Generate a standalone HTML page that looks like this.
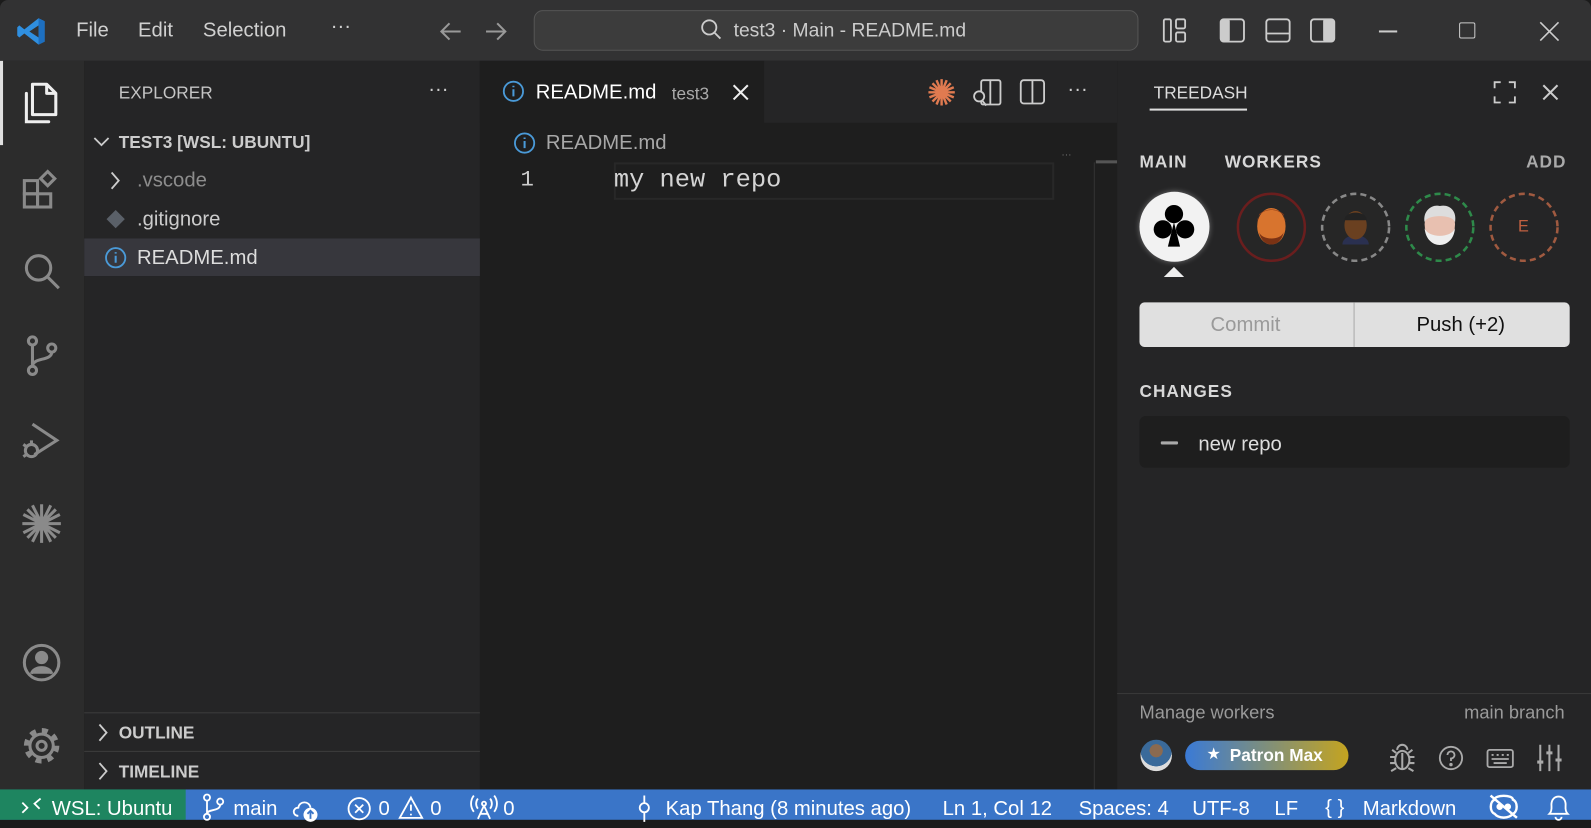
<!DOCTYPE html>
<html><head><meta charset="utf-8">
<style>
*{box-sizing:border-box;margin:0;padding:0}
html,body{width:1591px;height:828px;overflow:hidden;background:#1b1b1b}
#w{position:absolute;left:0;top:0;width:1568px;height:816px;transform:scale(1.01467,1.01471);transform-origin:0 0;font-family:"Liberation Sans",sans-serif;color:#ccc;background:#1b1b1b}
.a{position:absolute}
.t{position:absolute;white-space:nowrap;line-height:1}
svg{position:absolute;overflow:visible}
</style></head><body><div id="w">
<!-- title bar -->
<div class="a" style="left:0;top:0;width:1568px;height:60px;background:#323233;border-radius:8px 8px 0 0"></div>
<svg style="left:16px;top:16px" width="30" height="30" viewBox="0 0 30 30"><path d="M22 2 L28 5 V25 L22 28 L8 17 L3 21 L1 19 V11 L3 9 L8 13 Z M22 9 L13 15 L22 21 Z" fill="#2f8fe0"/><path d="M22 2 L28 5 V25 L22 28 Z" fill="#1d6fc0"/></svg>
<div class="t" style="left:75px;top:20px;font-size:20px;color:#d0d0d0">File</div>
<div class="t" style="left:136px;top:20px;font-size:20px;color:#d0d0d0">Edit</div>
<div class="t" style="left:200px;top:20px;font-size:20px;color:#d0d0d0">Selection</div>
<div class="t" style="left:326px;top:16px;font-size:20px;color:#d0d0d0">···</div>
<svg style="left:432px;top:20px" width="24" height="22"><path d="M22 11H3 M11 3 L3 11 L11 19" stroke="#999" stroke-width="2" fill="none"/></svg>
<svg style="left:477px;top:20px" width="24" height="22"><path d="M2 11H21 M13 3 L21 11 L13 19" stroke="#999" stroke-width="2" fill="none"/></svg>
<div class="a" style="left:526px;top:10px;width:596px;height:40px;background:#3c3c3c;border:1px solid #555;border-radius:9px"></div>
<svg style="left:690px;top:18px" width="22" height="22"><circle cx="9" cy="9" r="7" stroke="#ccc" stroke-width="1.8" fill="none"/><path d="M14 14 L20 20" stroke="#ccc" stroke-width="1.8"/></svg>
<div class="t" style="left:723px;top:21px;font-size:19px;color:#ccc">test3 · Main - README.md</div>
<svg style="left:1146px;top:18px" width="24" height="26"><rect x="1" y="1" width="7" height="22" rx="1.5" stroke="#ccc" stroke-width="1.8" fill="none"/><rect x="13" y="1" width="9" height="9" rx="1.5" stroke="#ccc" stroke-width="1.8" fill="none"/><rect x="13" y="14" width="9" height="9" rx="1.5" stroke="#ccc" stroke-width="1.8" fill="none"/></svg>
<svg style="left:1202px;top:18px" width="26" height="26"><rect x="1" y="1" width="23" height="22" rx="3" stroke="#ccc" stroke-width="1.8" fill="none"/><rect x="1" y="1" width="9" height="22" rx="2" fill="#ccc"/></svg>
<svg style="left:1247px;top:18px" width="26" height="26"><rect x="1" y="1" width="23" height="22" rx="3" stroke="#ccc" stroke-width="1.8" fill="none"/><path d="M1 15H24" stroke="#ccc" stroke-width="1.8"/></svg>
<svg style="left:1291px;top:18px" width="26" height="26"><rect x="1" y="1" width="23" height="22" rx="3" stroke="#ccc" stroke-width="1.8" fill="none"/><rect x="13" y="1" width="11" height="22" rx="2" fill="#ccc"/></svg>
<div class="a" style="left:1359px;top:30px;width:18px;height:2px;background:#ccc"></div>
<div class="a" style="left:1438px;top:22px;width:16px;height:16px;border:1.8px solid #ccc;border-radius:2px"></div>
<svg style="left:1517px;top:21px" width="20" height="20"><path d="M1 1L19 19M19 1L1 19" stroke="#ccc" stroke-width="1.6"/></svg>

<!-- activity bar -->
<div class="a" style="left:0;top:60px;width:83px;height:718px;background:#2c2c2c"></div>
<div class="a" style="left:0;top:60px;width:3px;height:83px;background:#e0e0e0"></div>
<svg style="left:22px;top:80px" width="38" height="44"><path d="M10 3 H24 L33 12 V33 H10 Z M24 3 V12 H33" stroke="#eee" stroke-width="3" fill="none" stroke-linejoin="round"/><path d="M4 12 V40 H26" stroke="#eee" stroke-width="3" fill="none" stroke-linecap="round"/></svg>
<svg style="left:22px;top:166px" width="38" height="40" fill="none" stroke="#8a8a8a" stroke-width="3"><rect x="2" y="12" width="13" height="13"/><rect x="2" y="25" width="13" height="13"/><rect x="15" y="25" width="13" height="13"/><path d="M18 10 L25 3 L32 10 L25 17 Z"/></svg>
<svg style="left:22px;top:248px" width="40" height="40" fill="none" stroke="#8a8a8a" stroke-width="3"><circle cx="16" cy="16" r="12"/><path d="M25 25 L36 36"/></svg>
<svg style="left:24px;top:330px" width="36" height="42" fill="none" stroke="#8a8a8a" stroke-width="3"><circle cx="8" cy="6" r="4"/><circle cx="8" cy="35" r="4"/><circle cx="27" cy="13" r="4"/><path d="M8 10 V31 M27 17 C27 26 8 22 8 31"/></svg>
<svg style="left:20px;top:414px" width="40" height="42" fill="none" stroke="#8a8a8a" stroke-width="3"><path d="M12 4 L36 20 L14 34"/><circle cx="11" cy="30" r="6"/><path d="M3 24 L6 26 M3 36 L6 34 M11 20 V23"/></svg>
<svg style="left:20px;top:495px" width="42" height="42" stroke="#8a8a8a" stroke-width="3"><path d="M21 2V40 M2 21H40 M7 7L35 35 M35 7L7 35 M12 3L30 39 M30 3L12 39 M3 12L39 30 M3 30L39 12"/></svg>
<svg style="left:22px;top:634px" width="40" height="40" fill="none" stroke="#8a8a8a" stroke-width="3"><circle cx="19" cy="19" r="17"/><circle cx="19" cy="14" r="5" fill="#8a8a8a"/><path d="M9 30 C11 22 27 22 29 30" fill="#8a8a8a"/></svg>
<svg style="left:22px;top:716px" width="40" height="40" fill="none" stroke="#8a8a8a"><circle cx="19" cy="19" r="15" stroke-width="5" stroke-dasharray="5.9 5.9"/><circle cx="19" cy="19" r="11.5" stroke-width="3"/><circle cx="19" cy="19" r="4.5" stroke-width="3"/></svg>

<!-- sidebar -->
<div class="a" style="left:83px;top:60px;width:390px;height:718px;background:#252526"></div>
<div class="t" style="left:117px;top:83px;font-size:17px;color:#c5c5c5">EXPLORER</div>
<div class="t" style="left:422px;top:78px;font-size:20px;color:#ccc">···</div>
<svg style="left:91px;top:133px" width="18" height="14"><path d="M2 3L9 10L16 3" stroke="#ccc" stroke-width="1.8" fill="none"/></svg>
<div class="t" style="left:117px;top:132px;font-size:17px;font-weight:bold;color:#ccc">TEST3 [WSL: UBUNTU]</div>
<svg style="left:108px;top:168px" width="12" height="20"><path d="M2 2L9 10L2 18" stroke="#ccc" stroke-width="1.8" fill="none"/></svg>
<div class="t" style="left:135px;top:168px;font-size:20px;color:#8c8c8c">.vscode</div>
<svg style="left:104px;top:206px" width="20" height="20"><path d="M10 1L19 10L10 19L1 10Z" fill="#5a6068"/></svg>
<div class="t" style="left:135px;top:206px;font-size:20px;color:#ccc">.gitignore</div>
<div class="a" style="left:83px;top:235px;width:390px;height:37px;background:#37373d"></div>
<svg style="left:103px;top:243px" width="22" height="22"><circle cx="11" cy="11" r="9.5" stroke="#4a9ad8" stroke-width="1.8" fill="none"/><path d="M11 9V16M11 5.5V7" stroke="#4a9ad8" stroke-width="2"/></svg>
<div class="t" style="left:135px;top:244px;font-size:20px;color:#ddd">README.md</div>
<div class="a" style="left:83px;top:702px;width:390px;height:1px;background:#3d3d3d"></div>
<svg style="left:96px;top:712px" width="12" height="20"><path d="M2 2L9 10L2 18" stroke="#ccc" stroke-width="1.8" fill="none"/></svg>
<div class="t" style="left:117px;top:714px;font-size:17px;font-weight:bold;color:#ccc">OUTLINE</div>
<div class="a" style="left:83px;top:740px;width:390px;height:1px;background:#3d3d3d"></div>
<svg style="left:96px;top:750px" width="12" height="20"><path d="M2 2L9 10L2 18" stroke="#ccc" stroke-width="1.8" fill="none"/></svg>
<div class="t" style="left:117px;top:752px;font-size:17px;font-weight:bold;color:#ccc">TIMELINE</div>

<!-- editor -->
<div class="a" style="left:473px;top:60px;width:628px;height:718px;background:#1e1e1e"></div>
<div class="a" style="left:473px;top:60px;width:628px;height:61px;background:#252526"></div>
<div class="a" style="left:473px;top:60px;width:280px;height:61px;background:#1e1e1e"></div>
<svg style="left:495px;top:79px" width="22" height="22"><circle cx="11" cy="11" r="9.5" stroke="#4a9ad8" stroke-width="1.8" fill="none"/><path d="M11 9V16M11 5.5V7" stroke="#4a9ad8" stroke-width="2"/></svg>
<div class="t" style="left:528px;top:81px;font-size:20px;color:#fff">README.md</div>
<div class="t" style="left:662px;top:84px;font-size:17px;color:#aaa">test3</div>
<svg style="left:721px;top:82px" width="18" height="18"><path d="M2 2L16 16M16 2L2 16" stroke="#eee" stroke-width="2"/></svg>
<svg style="left:914px;top:77px" width="28" height="28" stroke="#e07a50" stroke-width="2.4"><path d="M14 1V27 M1 14H27 M5 5L23 23 M23 5L5 23 M9 2L19 26 M19 2L9 26 M2 9L26 19 M2 19L26 9"/></svg>
<svg style="left:958px;top:78px" width="30" height="28" fill="none" stroke="#ccc" stroke-width="1.8"><rect x="9" y="1" width="19" height="24" rx="2"/><path d="M18 1V25"/><circle cx="7" cy="17" r="5" fill="#252526"/><path d="M10 21L14 26"/></svg>
<svg style="left:1005px;top:78px" width="26" height="26" fill="none" stroke="#ccc" stroke-width="1.8"><rect x="1" y="1" width="23" height="23" rx="3"/><path d="M12.5 1V24"/></svg>
<div class="t" style="left:1052px;top:78px;font-size:20px;color:#ccc">···</div>
<svg style="left:506px;top:130px" width="22" height="22"><circle cx="11" cy="11" r="9.5" stroke="#4a9ad8" stroke-width="1.8" fill="none"/><path d="M11 9V16M11 5.5V7" stroke="#4a9ad8" stroke-width="2"/></svg>
<div class="t" style="left:538px;top:131px;font-size:20px;color:#a8a8a8">README.md</div>
<div class="a" style="left:605px;top:160px;width:434px;height:37px;border:2px solid #282828"></div>
<div class="t" style="left:513px;top:167px;font-size:22px;font-family:'Liberation Mono',monospace;color:#ccc">1</div>
<div class="t" style="left:605px;top:165px;font-size:25px;font-family:'Liberation Mono',monospace;color:#d4d4d4">my new repo</div>
<div class="t" style="left:1046px;top:148px;font-size:10px;color:#777">···</div>
<div class="a" style="left:1078px;top:160px;width:1px;height:618px;background:#333"></div>
<div class="a" style="left:1080px;top:158px;width:21px;height:3px;background:#555"></div>

<!-- right panel -->
<div class="a" style="left:1101px;top:60px;width:467px;height:718px;background:#252526"></div>
<div class="t" style="left:1137px;top:83px;font-size:17px;color:#ddd">TREEDASH</div>
<div class="a" style="left:1133px;top:107px;width:96px;height:2px;background:#ddd"></div>
<svg style="left:1472px;top:80px" width="22" height="22" fill="none" stroke="#ccc" stroke-width="1.8"><path d="M1 7V1H7 M15 1H21V7 M21 15V21H15 M7 21H1V15"/></svg>
<svg style="left:1519px;top:82px" width="18" height="18"><path d="M2 2L16 16M16 2L2 16" stroke="#ccc" stroke-width="2"/></svg>
<div class="t" style="left:1123px;top:151px;font-size:17px;font-weight:bold;color:#d8d8d8;letter-spacing:1px">MAIN</div>
<div class="t" style="left:1207px;top:151px;font-size:17px;font-weight:bold;color:#d8d8d8;letter-spacing:1px">WORKERS</div>
<div class="t" style="left:1504px;top:151px;font-size:17px;font-weight:bold;color:#aaa;letter-spacing:1px">ADD</div>
<div class="a" style="left:1123px;top:189px;width:69px;height:69px;border-radius:50%;background:#f2f2f2;box-shadow:0 0 6px rgba(255,255,255,.35)"></div>
<svg style="left:1135px;top:199px" width="44" height="46"><circle cx="22" cy="12" r="9"/><circle cx="11" cy="27" r="9"/><circle cx="33" cy="27" r="9"/><path d="M22 20 L16 44 H28 Z"/></svg>
<svg style="left:1146px;top:262px" width="22" height="12"><path d="M11 1L21 11H1Z" fill="#eee"/></svg>
<svg style="left:1218px;top:189px" width="70" height="70"><circle cx="35" cy="35" r="33" stroke="#6a1e1e" stroke-width="2.5" fill="#262626"/><ellipse cx="35" cy="34" rx="14" ry="18" fill="#d8742e"/><path d="M21 30 C21 14 49 14 49 30 L47 22 C40 16 30 16 23 22Z" fill="#8a3a18"/><path d="M23 40 C26 56 44 56 47 40 C44 48 26 48 23 40Z" fill="#7a3214"/></svg>
<svg style="left:1301px;top:189px" width="70" height="70"><circle cx="35" cy="35" r="33" stroke="#888" stroke-width="2.5" stroke-dasharray="6 4" fill="#262626"/><path d="M22 52 C22 40 48 40 48 52Z" fill="#2a3050"/><ellipse cx="35" cy="33" rx="11" ry="14" fill="#6a4020"/><path d="M24 28 C24 18 46 18 46 28Z" fill="#222"/></svg>
<svg style="left:1384px;top:189px" width="70" height="70"><circle cx="35" cy="35" r="33" stroke="#2e8a4a" stroke-width="2.5" stroke-dasharray="6 4" fill="#262626"/><ellipse cx="35" cy="32" rx="15" ry="18" fill="#e8c0b0"/><path d="M20 36 C22 58 48 58 50 36 C46 46 24 46 20 36Z" fill="#eee"/><path d="M20 30 C18 18 28 12 35 14 C44 12 52 18 50 30 C48 22 22 22 20 30Z" fill="#ddd"/></svg>
<svg style="left:1467px;top:189px" width="70" height="70"><circle cx="35" cy="35" r="33" stroke="#a05a40" stroke-width="2.5" stroke-dasharray="6 4" fill="none"/></svg>
<div class="t" style="left:1496px;top:216px;font-size:16px;color:#c06040">E</div>
<div class="a" style="left:1123px;top:298px;width:424px;height:44px;background:#e0e0e0;border-radius:5px"></div>
<div class="a" style="left:1334px;top:298px;width:1px;height:44px;background:#aaa"></div>
<div class="t" style="left:1193px;top:310px;font-size:20px;color:#9a9a9a">Commit</div>
<div class="t" style="left:1396px;top:310px;font-size:20px;color:#111">Push (+2)</div>
<div class="t" style="left:1123px;top:377px;font-size:17px;font-weight:bold;color:#d8d8d8;letter-spacing:1px">CHANGES</div>
<div class="a" style="left:1123px;top:410px;width:424px;height:51px;background:#1e1e1e;border-radius:6px"></div>
<div class="a" style="left:1144px;top:435px;width:17px;height:3px;background:#aaa;border-radius:1px"></div>
<div class="t" style="left:1181px;top:428px;font-size:20px;color:#ddd">new repo</div>
<div class="a" style="left:1101px;top:683px;width:467px;height:1px;background:#3a3a3a"></div>
<div class="t" style="left:1123px;top:693px;font-size:18px;color:#9a9a9a">Manage workers</div>
<div class="t" style="left:1443px;top:693px;font-size:18px;color:#9a9a9a">main branch</div>
<div class="a" style="left:1124px;top:729px;width:31px;height:31px;border-radius:50%;background:radial-gradient(circle at 50% 35%,#8a6a50 0 25%,#3a6a9a 26% 60%,#ddd 61%)"></div>
<div class="a" style="left:1168px;top:730px;width:161px;height:29px;border-radius:15px;background:linear-gradient(90deg,#3a7ad6,#c4a420)"></div>
<div class="t" style="left:1189px;top:736px;font-size:16px;color:#fff">★</div>
<div class="t" style="left:1212px;top:736px;font-size:17px;font-weight:bold;color:#fff">Patron Max</div>
<svg style="left:1368px;top:733px" width="28" height="28" fill="none" stroke="#aaa" stroke-width="2"><ellipse cx="14" cy="16" rx="7" ry="9"/><path d="M9 6 A5 5 0 0 1 19 6 M14 9V25 M7 13H2 M21 13H26 M7 19H2 M21 19H26 M8 24L3 27 M20 24L25 27 M8 9L4 6 M20 9L24 6"/></svg>
<svg style="left:1418px;top:735px" width="26" height="26" fill="none" stroke="#aaa" stroke-width="1.8"><circle cx="12" cy="12" r="11"/><path d="M8.5 9 A3.5 3.5 0 1 1 12 12.5 V15"/><circle cx="12" cy="18.5" r="0.8" fill="#aaa"/></svg>
<svg style="left:1465px;top:738px" width="28" height="20" fill="none" stroke="#aaa" stroke-width="1.8"><rect x="1" y="1" width="25" height="17" rx="2"/><path d="M5 6H7 M10 6H12 M15 6H17 M20 6H22 M5 10H22 M7 14H20"/></svg>
<svg style="left:1514px;top:733px" width="26" height="28" stroke="#aaa" stroke-width="2"><path d="M4 1V27 M13 1V27 M22 1V27"/><path d="M1 18H7 M10 9H16 M19 16H25" stroke-width="3"/></svg>

<!-- status bar -->
<div class="a" style="left:0;top:778px;width:1568px;height:30px;background:#3a75c8"></div>
<div class="a" style="left:0;top:778px;width:183px;height:30px;background:#1e8560"></div>
<div class="a" style="left:0;top:808px;width:1568px;height:8px;background:#1b1b1b"></div>
<svg style="left:20px;top:785px" width="22" height="18" fill="none" stroke="#fff" stroke-width="1.8"><path d="M2 6L7 11L2 16 M20 2L14 7L19 12"/></svg>
<div class="t" style="left:51px;top:787px;font-size:20px;color:#fff">WSL: Ubuntu</div>
<svg style="left:199px;top:782px" width="24" height="28" fill="none" stroke="#fff" stroke-width="1.8"><circle cx="5" cy="4" r="3"/><circle cx="5" cy="23" r="3"/><circle cx="18" cy="8" r="3"/><path d="M5 7V20 M18 11 C18 18 5 15 5 20"/></svg>
<div class="t" style="left:230px;top:787px;font-size:20px;color:#fff">main</div>
<svg style="left:286px;top:784px" width="30" height="26" fill="none" stroke="#fff" stroke-width="1.8"><path d="M8 20 C2 20 2 12 8 12 C9 5 19 5 20 12"/><circle cx="20" cy="19" r="6" fill="#fff"/><path d="M20 23V16 M17 18L20 15L23 18" stroke="#3a75c8"/></svg>
<svg style="left:342px;top:785px" width="24" height="24" fill="none" stroke="#fff" stroke-width="1.8"><circle cx="12" cy="12" r="10.5"/><path d="M8 8L16 16M16 8L8 16"/></svg>
<div class="t" style="left:373px;top:787px;font-size:20px;color:#fff">0</div>
<svg style="left:392px;top:784px" width="26" height="24" fill="none" stroke="#fff" stroke-width="1.8"><path d="M13 2L24 22H2Z M13 9V15 M13 18V19.5"/></svg>
<div class="t" style="left:424px;top:787px;font-size:20px;color:#fff">0</div>
<svg style="left:464px;top:783px" width="26" height="26" fill="none" stroke="#fff" stroke-width="1.8"><circle cx="13" cy="9" r="2"/><path d="M13 11L7 24 M13 11L19 24 M9 19H17 M7 4 A8 8 0 0 0 7 14 M19 4 A8 8 0 0 1 19 14 M3 1 A13 13 0 0 0 3 17 M23 1 A13 13 0 0 1 23 17"/></svg>
<div class="t" style="left:496px;top:787px;font-size:20px;color:#fff">0</div>
<svg style="left:627px;top:783px" width="16" height="28" fill="none" stroke="#fff" stroke-width="1.8"><circle cx="8" cy="13" r="4.5"/><path d="M8 1V8.5 M8 17.5V27"/></svg>
<div class="t" style="left:656px;top:787px;font-size:20px;color:#fff">Kap Thang (8 minutes ago)</div>
<div class="t" style="left:929px;top:787px;font-size:20px;color:#fff">Ln 1, Col 12</div>
<div class="t" style="left:1063px;top:787px;font-size:20px;color:#fff">Spaces: 4</div>
<div class="t" style="left:1175px;top:787px;font-size:20px;color:#fff">UTF-8</div>
<div class="t" style="left:1256px;top:787px;font-size:20px;color:#fff">LF</div>
<div class="t" style="left:1306px;top:786px;font-size:20px;color:#fff">{ }</div>
<div class="t" style="left:1343px;top:787px;font-size:20px;color:#fff">Markdown</div>
<svg style="left:1467px;top:782px" width="30" height="26" fill="none" stroke="#fff" stroke-width="2.4"><path d="M6 6 C6 1 24 1 24 6 C29 8 29 18 24 20 C20 25 10 25 6 20 C1 18 1 8 6 6Z"/><circle cx="11" cy="13" r="2" fill="#fff"/><circle cx="19" cy="13" r="2" fill="#fff"/><path d="M2 2L28 24"/></svg>
<svg style="left:1524px;top:783px" width="24" height="26" fill="none" stroke="#fff" stroke-width="1.8"><path d="M3 19 C6 16 5 12 5 10 C5 5 8 2 12 2 C16 2 19 5 19 10 C19 12 18 16 21 19Z M9 22 A3 3 0 0 0 15 22"/></svg>
</div></body></html>
